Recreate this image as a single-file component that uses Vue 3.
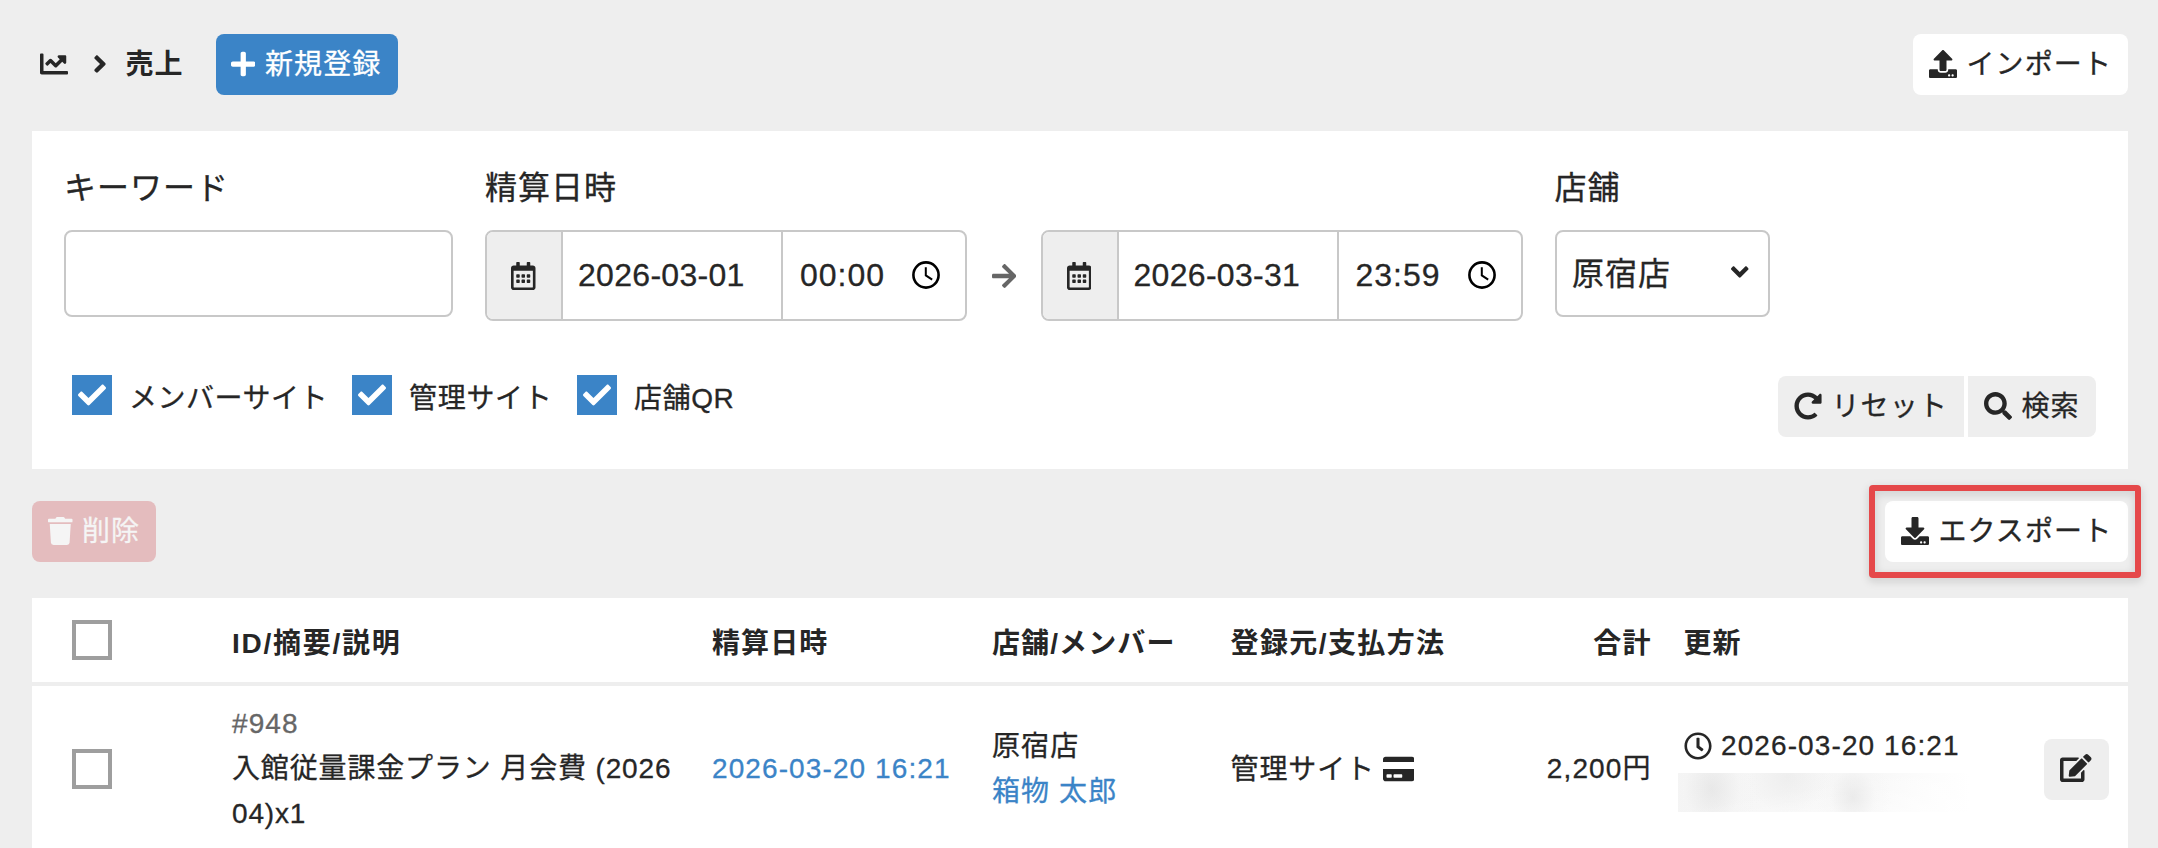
<script setup>
import { h } from 'vue'

const icons = {
  chart: [512, 'M496 384H64V80c0-8.84-7.16-16-16-16H16C7.16 64 0 71.16 0 80v336c0 17.67 14.33 32 32 32h464c8.84 0 16-7.16 16-16v-32c0-8.84-7.16-16-16-16zM464 96H345.94c-21.38 0-32.09 25.85-16.97 40.97l32.4 32.4L288 242.75l-73.37-73.37c-12.5-12.5-32.76-12.5-45.25 0l-68.69 68.69c-6.25 6.25-6.25 16.38 0 22.63l22.62 22.62c6.25 6.25 16.38 6.25 22.63 0L192 237.25l73.37 73.37c12.5 12.5 32.76 12.5 45.25 0l96-96 32.4 32.4c15.12 15.12 40.97 4.41 40.97-16.97V112c.01-8.84-7.15-16-15.99-16z'],
  angleRight: [256, 'M224.3 273l-136 136c-9.4 9.4-24.6 9.4-33.9 0l-22.6-22.6c-9.4-9.4-9.4-24.6 0-33.9l96.4-96.4-96.4-96.4c-9.4-9.4-9.4-24.6 0-33.9L54.3 103c9.4-9.4 24.6-9.4 33.9 0l136 136c9.5 9.4 9.5 24.6.1 34z'],
  angleDown: [320, 'M143 352.3L7 216.3c-9.4-9.4-9.4-24.6 0-33.9l22.6-22.6c9.4-9.4 24.6-9.4 33.9 0l96.4 96.4 96.4-96.4c9.4-9.4 24.6-9.4 33.9 0l22.6 22.6c9.4 9.4 9.4 24.6 0 33.9l-136 136c-9.2 9.4-24.4 9.4-33.8 0z'],
  plus: [448, 'M416 208H272V64c0-17.67-14.33-32-32-32h-32c-17.67 0-32 14.33-32 32v144H32c-17.67 0-32 14.33-32 32v32c0 17.67 14.33 32 32 32h144v144c0 17.67 14.33 32 32 32h32c17.67 0 32-14.33 32-32V304h144c17.67 0 32-14.33 32-32v-32c0-17.67-14.33-32-32-32z'],
  upload: [512, 'M296 384h-80c-13.3 0-24-10.7-24-24V192h-87.7c-17.8 0-26.7-21.5-14.1-34.1L242.3 5.7c7.5-7.5 19.8-7.5 27.3 0l152.2 152.2c12.6 12.6 3.7 34.1-14.1 34.1H320v168c0 13.3-10.7 24-24 24zm216-8v112c0 13.3-10.7 24-24 24H24c-13.3 0-24-10.7-24-24V376c0-13.3 10.7-24 24-24h136v8c0 30.9 25.1 56 56 56h80c30.9 0 56-25.1 56-56v-8h136c13.3 0 24 10.7 24 24zm-124 88c0-11-9-20-20-20s-20 9-20 20 9 20 20 20 20-9 20-20zm64 0c0-11-9-20-20-20s-20 9-20 20 9 20 20 20 20-9 20-20z'],
  download: [512, 'M216 0h80c13.3 0 24 10.7 24 24v168h87.7c17.8 0 26.7 21.5 14.1 34.1L269.7 378.3c-7.5 7.5-19.8 7.5-27.3 0L90.1 226.1c-12.6-12.6-3.7-34.1 14.1-34.1H192V24c0-13.3 10.7-24 24-24zm296 376v112c0 13.3-10.7 24-24 24H24c-13.3 0-24-10.7-24-24V376c0-13.3 10.7-24 24-24h146.7l49 49c20.1 20.1 52.5 20.1 72.6 0l49-49H488c13.3 0 24 10.7 24 24zm-124 88c0-11-9-20-20-20s-20 9-20 20 9 20 20 20 20-9 20-20zm64 0c0-11-9-20-20-20s-20 9-20 20 9 20 20 20 20-9 20-20z'],
  calendar: [448, 'M148 288h-40c-6.6 0-12-5.4-12-12v-40c0-6.6 5.4-12 12-12h40c6.6 0 12 5.4 12 12v40c0 6.6-5.4 12-12 12zm108-12v-40c0-6.6-5.4-12-12-12h-40c-6.6 0-12 5.4-12 12v40c0 6.6 5.4 12 12 12h40c6.6 0 12-5.4 12-12zm96 0v-40c0-6.6-5.4-12-12-12h-40c-6.6 0-12 5.4-12 12v40c0 6.6 5.4 12 12 12h40c6.6 0 12-5.4 12-12zm-96 96v-40c0-6.6-5.4-12-12-12h-40c-6.6 0-12 5.4-12 12v40c0 6.6 5.4 12 12 12h40c6.6 0 12-5.4 12-12zm-96 0v-40c0-6.6-5.4-12-12-12h-40c-6.6 0-12 5.4-12 12v40c0 6.6 5.4 12 12 12h40c6.6 0 12-5.4 12-12zm192 0v-40c0-6.6-5.4-12-12-12h-40c-6.6 0-12 5.4-12 12v40c0 6.6 5.4 12 12 12h40c6.6 0 12-5.4 12-12zm96-260v352c0 26.5-21.5 48-48 48H48c-26.5 0-48-21.5-48-48V112c0-26.5 21.5-48 48-48h48V12c0-6.6 5.4-12 12-12h40c6.6 0 12 5.4 12 12v52h128V12c0-6.6 5.4-12 12-12h40c6.6 0 12 5.4 12 12v52h48c26.5 0 48 21.5 48 48zm-48 346V160H48v298c0 3.3 2.7 6 6 6h340c3.3 0 6-2.7 6-6z'],
  arrow: [448, 'M190.5 66.9l22.2-22.2c9.4-9.4 24.6-9.4 33.9 0L441 239c9.4 9.4 9.4 24.6 0 33.9L246.6 467.3c-9.4 9.4-24.6 9.4-33.9 0l-22.2-22.2c-9.5-9.5-9.3-25 .4-34.3L311.4 296H24c-13.3 0-24-10.7-24-24v-32c0-13.3 10.7-24 24-24h287.4L190.9 101.2c-9.8-9.3-10-24.8-.4-34.3z'],
  check: [512, 'M173.898 439.404l-166.4-166.4c-9.997-9.997-9.997-26.206 0-36.204l36.203-36.204c9.997-9.998 26.207-9.998 36.204 0L192 312.69 432.095 72.596c9.997-9.997 26.207-9.997 36.204 0l36.203 36.204c9.997 9.997 9.997 26.206 0 36.204l-294.4 294.401c-9.998 9.997-26.207 9.997-36.204-.001z'],
  redo: [512, 'M256.455 8c66.269.119 126.437 26.233 170.859 68.685l35.715-35.715C478.149 25.851 504 36.559 504 57.941V192c0 13.255-10.745 24-24 24H345.941c-21.382 0-32.09-25.851-16.971-40.971l41.75-41.75c-30.864-28.899-70.801-44.907-113.23-45.273-92.398-.798-170.283 73.977-169.484 169.442C88.764 348.009 162.184 424 256 424c41.127 0 79.997-14.678 110.629-41.556 4.743-4.161 11.906-3.908 16.368.553l39.662 39.662c4.872 4.872 4.631 12.815-.482 17.433C378.202 479.813 319.926 504 256 504 119.034 504 8.001 392.967 8 256.002 7.999 119.193 119.646 7.755 256.455 8z'],
  search: [512, 'M505 442.7L405.3 343c-4.5-4.5-10.6-7-17-7H372c27.6-35.3 44-79.7 44-128C416 93.1 322.9 0 208 0S0 93.1 0 208s93.1 208 208 208c48.3 0 92.7-16.4 128-44v16.3c0 6.4 2.5 12.5 7 17l99.7 99.7c9.4 9.4 24.6 9.4 33.9 0l28.3-28.3c9.4-9.4 9.4-24.6.1-34zM208 336c-70.7 0-128-57.2-128-128 0-70.7 57.2-128 128-128 70.7 0 128 57.2 128 128 0 70.7-57.2 128-128 128z'],
  trash: [448, 'M432 32H312l-9.4-18.7A24 24 0 0 0 281.1 0H166.8a23.72 23.72 0 0 0-21.4 13.3L136 32H16A16 16 0 0 0 0 48v32a16 16 0 0 0 16 16h416a16 16 0 0 0 16-16V48a16 16 0 0 0-16-16zM53.2 467a48 48 0 0 0 47.9 45h245.8a48 48 0 0 0 47.9-45L416 128H32z'],
  card: [576, 'M0 432c0 26.5 21.5 48 48 48h480c26.5 0 48-21.5 48-48V256H0v176zm192-68c0-6.6 5.4-12 12-12h136c6.6 0 12 5.4 12 12v40c0 6.6-5.4 12-12 12H204c-6.6 0-12-5.4-12-12v-40zm-128 0c0-6.6 5.4-12 12-12h72c6.6 0 12 5.4 12 12v40c0 6.6-5.4 12-12 12H76c-6.6 0-12-5.4-12-12v-40zM576 80v48H0V80c0-26.5 21.5-48 48-48h480c26.5 0 48 21.5 48 48z'],
  clock: [512, 'M256 8C119 8 8 119 8 256s111 248 248 248 248-111 248-248S393 8 256 8zm0 448c-110.5 0-200-89.5-200-200S145.5 56 256 56s200 89.5 200 200-89.5 200-200 200zm61.8-104.4l-84.9-61.7c-3.1-2.3-4.9-5.9-4.9-9.7V116c0-6.6 5.4-12 12-12h32c6.6 0 12 5.4 12 12v141.7l66.8 48.6c5.4 3.9 6.5 11.4 2.6 16.8L334.6 349c-3.9 5.3-11.4 6.5-16.8 2.6z'],
  edit: [576, 'M402.6 83.2l90.2 90.2c3.8 3.8 3.8 10 0 13.8L274.4 405.6l-92.8 10.3c-12.4 1.4-22.9-9.1-21.5-21.5l10.3-92.8L388.8 83.2c3.8-3.8 10-3.8 13.8 0zm162-22.9l-48.8-48.8c-15.2-15.2-39.9-15.2-55.2 0l-35.4 35.4c-3.8 3.8-3.8 10 0 13.8l90.2 90.2c3.8 3.8 10 3.8 13.8 0l35.4-35.4c15.2-15.3 15.2-40 0-55.2zM384 346.2V448H64V128h229.8c3.2 0 6.2-1.3 8.5-3.5l40-40c7.6-7.6 2.2-20.5-8.5-20.5H48C21.5 64 0 85.5 0 112v352c0 26.5 21.5 48 48 48h352c26.5 0 48-21.5 48-48V306.2c0-10.7-12.9-16-20.5-8.5l-40 40c-2.2 2.3-3.5 5.3-3.5 8.5z'],
}

const Icon = ({ name }) => {
  const [w, d] = icons[name]
  return h('svg', { viewBox: `0 0 ${w} 512`, width: (w * 28) / 512, height: 28, fill: 'currentColor' }, [h('path', { d })])
}
Icon.props = ['name']

const ranges = [
  { date: '2026-03-01', time: '00:00' },
  { date: '2026-03-31', time: '23:59' },
]
const sources = ['メンバーサイト', '管理サイト', '店舗QR']
</script>

<template>
  <div class="page">
    <header class="top">
      <Icon name="chart" />
      <Icon name="angleRight" class="sep" />
      <h1>売上</h1>
      <button class="btn primary"><Icon name="plus" /><span>新規登録</span></button>
      <button class="btn white push"><Icon name="upload" /><span>インポート</span></button>
    </header>

    <section class="filters">
      <div class="fields">
        <div class="field">
          <label>キーワード</label>
          <div class="box keyword"></div>
        </div>
        <div class="field">
          <label>精算日時</label>
          <div class="ranges">
            <template v-for="(r, i) in ranges" :key="r.date">
              <span v-if="i" class="to"><Icon name="arrow" /></span>
              <div class="box range">
                <span class="addon"><Icon name="calendar" /></span>
                <span class="date">{{ r.date }}</span>
                <span class="time">
                  {{ r.time }}
                  <svg width="28" height="28" viewBox="0 0 28 28" fill="none" stroke="#000">
                    <circle cx="14" cy="14" r="12.6" stroke-width="2.6" />
                    <path d="M13.8 6.2v8.2l6.4 4.2" stroke-width="2" />
                  </svg>
                </span>
              </div>
            </template>
          </div>
        </div>
        <div class="field">
          <label>店舗</label>
          <div class="box select"><span>原宿店</span><Icon name="angleDown" /></div>
        </div>
      </div>

      <div class="actions">
        <div class="checks">
          <div v-for="s in sources" :key="s" class="check">
            <span class="tick"><Icon name="check" /></span><span class="name">{{ s }}</span>
          </div>
        </div>
        <div class="group">
          <button class="btn grey first"><Icon name="redo" /><span>リセット</span></button>
          <button class="btn grey last"><Icon name="search" /><span>検索</span></button>
        </div>
      </div>
    </section>

    <div class="bulk">
      <button class="btn danger"><Icon name="trash" /><span>削除</span></button>
      <div class="export">
        <button class="btn white wide"><Icon name="download" /><span>エクスポート</span></button>
        <i class="mark"></i>
      </div>
    </div>

    <section class="list">
      <div class="row head">
        <div><i class="cb"></i></div>
        <div class="t id">ID/摘要/説明</div>
        <div class="t when">精算日時</div>
        <div class="t">店舗/メンバー</div>
        <div class="t pm">登録元/支払方法</div>
        <div class="t num">合計</div>
        <div class="t upd">更新</div>
        <div></div>
      </div>
      <div class="row item">
        <div><i class="cb"></i></div>
        <div class="desc"><span class="muted">#948</span><br />入館従量課金プラン 月会費 (2026<br />04)x1</div>
        <div class="link when">2026-03-20 16:21</div>
        <div class="shop">原宿店<br /><span class="link">箱物 太郎</span></div>
        <div class="pay"><span>管理サイト</span><Icon name="card" /></div>
        <div class="num">2,200円</div>
        <div class="upd">
          <div class="stamp"><Icon name="clock" />2026-03-20 16:21</div>
          <div class="hidden-name"></div>
        </div>
        <button class="btn grey edit"><Icon name="edit" /></button>
      </div>
    </section>
  </div>
</template>

<style>
body { background: #eee; overflow: hidden; }
</style>

<style scoped>
.page {
  box-sizing: border-box;
  width: 2158px;
  height: 848px;
  overflow: hidden;
  padding: 34px 30px 0 32px;
  background: #eee;
  color: #262626;
  font: 28px/44.8px "Liberation Sans", "Noto Sans CJK JP", sans-serif;
  letter-spacing: 1.1px;
  -webkit-text-stroke: .3px currentColor;
}
.page * { box-sizing: border-box; }
svg { display: block; flex: none; }
.top { display: flex; align-items: center; height: 61px; padding-left: 8px; }
.top > svg { margin-bottom: 2px; }
.sep { margin-left: 25px; }
h1 { margin: 1px 32px 0 18.5px; font-size: 28px; line-height: 44.8px; font-weight: 700; width: 58px; white-space: nowrap; -webkit-text-stroke: 0; }
.btn {
  display: flex;
  align-items: center;
  height: 61px;
  margin: 0;
  padding: 0 14px 2px 16px;
  border: 0;
  border-radius: 8px;
  font: inherit;
  letter-spacing: inherit;
  color: inherit;
  white-space: nowrap;
}
.btn span { margin: 3px 0 0 9.5px; }
.primary { width: 182px; padding-left: 15px; background: #3b84c7; color: #fff; }
.primary span { margin-left: 10px; }
.white { width: 215px; background: #fff; }
.wide { width: 243px; }
.push { margin-left: auto; }
.grey { background: #eee; }
.first { width: 186px; border-radius: 8px 0 0 8px; }
.last { width: 128px; border-radius: 0 8px 8px 0; }
.danger { width: 124px; background: #e4bcbe; color: #f5f5f5; }

.filters { margin-top: 36px; height: 338px; padding: 32px; background: #fff; }
.fields { display: flex; gap: 32px; font-size: 32px; letter-spacing: 1px; height: 158px; }
.field label { display: block; line-height: 51px; margin-bottom: 16px; }
.box { display: flex; align-items: center; border: 2px solid #c8c8c8; border-radius: 8px; background: #fff; height: 87px; }
.keyword { width: 389px; }
.ranges { display: flex; align-items: center; }
.range { width: 482px; height: 91px; overflow: hidden; }
.addon { display: flex; align-items: center; padding-left: 24px; width: 76px; height: 100%; background: #eee; border-right: 2px solid #c8c8c8; }
.date { display: flex; align-items: center; width: 220px; height: 100%; padding-left: 15px; border-right: 2px solid #c8c8c8; letter-spacing: .3px; }
.time { display: flex; align-items: center; padding-left: 17px; }
.time svg { margin-left: 27px; }
.to { width: 73.5px; display: flex; justify-content: center; color: #666; }
.select { width: 215px; justify-content: space-between; padding: 0 19px 0 15.5px; }
.select span { margin-top: 2px; }
.select svg { margin-top: -4px; }

.actions { display: flex; justify-content: space-between; padding: 55px 0 0 8px; }
.checks { display: flex; margin-top: -1px; }
.check { display: flex; height: 40px; }
.check:nth-child(1) { width: 280px; letter-spacing: .5px; }
.check:nth-child(2) { width: 225px; letter-spacing: .7px; }
.check:nth-child(3) { letter-spacing: .6px; }
.tick { width: 40px; height: 40px; background: #3b84c7; color: #fff; display: flex; align-items: center; justify-content: center; }
.name { margin: 2px 0 0 17px; }
.group { display: flex; gap: 4px; }

.bulk { display: flex; justify-content: space-between; margin-top: 32px; }
.export { position: relative; }
.mark {
  position: absolute;
  left: -16px;
  top: -16px;
  width: 272px;
  height: 93px;
  border: 6px solid #e5484a;
  border-radius: 4px;
  filter: drop-shadow(0 3px 4px rgba(0, 0, 0, .16));
}

.list { margin-top: 36px; background: #fff; }
.row { display: grid; grid-template-columns: 200px 479px 281px 238.5px 200px 221px 393px 65px; align-items: center; }
.row > :first-child { padding-left: 40px; }
.cb { display: block; width: 40px; height: 40px; border: 4px solid #9e9e9e; background: #fff; }
.head { height: 88px; border-bottom: 4px solid #eee; font-weight: 700; -webkit-text-stroke: 0; }
.t { padding-top: 8px; white-space: nowrap; }
.id { letter-spacing: 1.75px; }
.pm { letter-spacing: 1.4px; }
.item { height: 166.4px; white-space: nowrap; }
.desc { letter-spacing: .85px; }
.when { padding-left: 1px; }
.shop { padding-top: 2px; }
.num { text-align: right; }
.upd { padding-left: 32px; }
.muted { color: #666; letter-spacing: 1.1px; }
.link { color: #3b84c7; }
.pay { display: flex; align-items: center; letter-spacing: .9px; }
.pay span { margin-top: 2px; }
.pay svg { margin-left: 7.5px; }
.stamp { display: flex; align-items: center; gap: 9.5px; }
.stamp svg { margin-top: -1px; }
.hidden-name {
  height: 39px;
  width: 292px;
  margin: 4px 0 2px -6px;
  background:
    radial-gradient(ellipse 46px 60px at 34px 16px, rgba(216, 216, 216, .45), rgba(240, 240, 240, .15) 60%, rgba(255, 255, 255, 0)),
    radial-gradient(ellipse 40px 36px at 110px 4px, rgba(226, 226, 226, .4), rgba(255, 255, 255, 0)),
    radial-gradient(ellipse 38px 46px at 175px 24px, rgba(218, 218, 218, .45), rgba(240, 240, 240, .15) 60%, rgba(255, 255, 255, 0)),
    linear-gradient(170deg, rgba(255, 255, 255, 0) 40%, rgba(255, 255, 255, .7)),
    linear-gradient(90deg, #f5f5f5, #f7f7f7 65%, #fcfcfc 85%, #fff);
}
.edit { width: 65px; margin-left: -65px; padding: 0 0 2px 16px; }
.row > .edit { margin-left: 0; position: static; justify-self: start; }
.row { grid-template-columns: 200px 479px 281px 238.5px 200px 221px 392.5px 65px; }
</style>
